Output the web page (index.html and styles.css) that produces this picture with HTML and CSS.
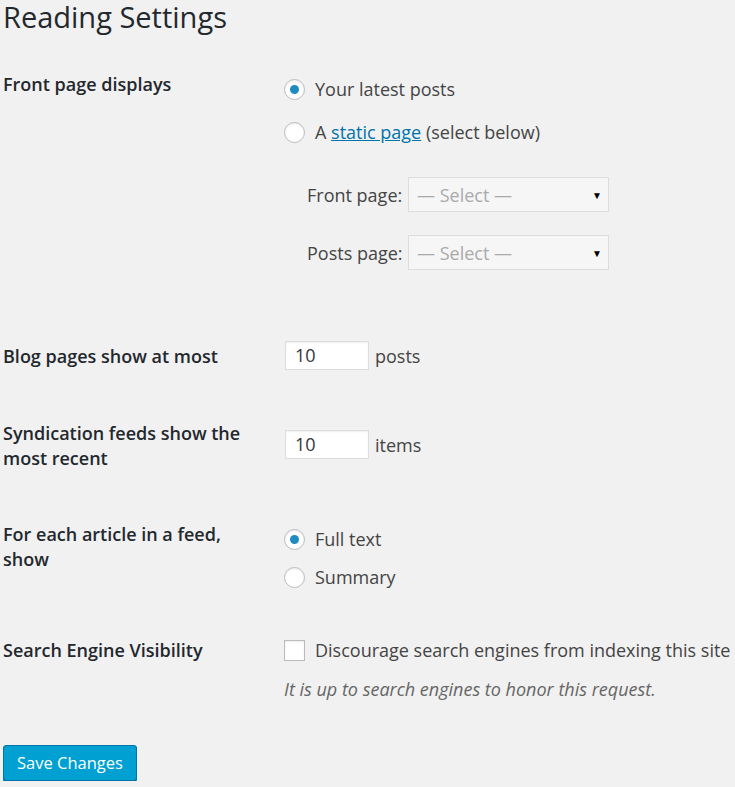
FILE: index.html
```html
<!DOCTYPE html>
<html lang="en">
<head>
<meta charset="utf-8">
<title>Reading Settings</title>
<link rel="stylesheet" href="styles.css">
</head>
<body>
<div class="wrap">
  <h1 class="page-title">Reading Settings</h1>
  <form class="settings">
    <div class="row row-front">
      <div class="label">Front page displays</div>
      <div class="field">
        <label class="choice"><span class="radio checked"></span>Your latest posts</label>
        <label class="choice"><span class="radio"></span>A&nbsp;<a href="#" class="link">static page</a>&nbsp;(select below)</label>
        <div class="sub">
          <div class="sub-row">
            <span class="sub-label">Front page:</span>
            <span class="select"><span class="select-text">— Select —</span><span class="caret">▼</span></span>
          </div>
          <div class="sub-row">
            <span class="sub-label">Posts page:</span>
            <span class="select"><span class="select-text">— Select —</span><span class="caret">▼</span></span>
          </div>
        </div>
      </div>
    </div>

    <div class="row row-blog">
      <div class="label">Blog pages show at most</div>
      <div class="field inline">
        <span class="num">10</span><span class="unit">posts</span>
      </div>
    </div>

    <div class="row row-feed">
      <div class="label">Syndication feeds show the most recent</div>
      <div class="field inline">
        <span class="num">10</span><span class="unit">items</span>
      </div>
    </div>

    <div class="row row-article">
      <div class="label">For each article in a feed, show</div>
      <div class="field">
        <label class="choice"><span class="radio checked"></span>Full text</label>
        <label class="choice choice-tight"><span class="radio"></span>Summary</label>
      </div>
    </div>

    <div class="row row-search">
      <div class="label">Search Engine Visibility</div>
      <div class="field">
        <label class="choice"><span class="check"></span>Discourage search engines from indexing this site</label>
        <p class="desc">It is up to search engines to honor this request.</p>
      </div>
    </div>

    <div class="submit">
      <span class="button">Save Changes</span>
    </div>
  </form>
</div>
</body>
</html>
```

FILE: styles.css
```css
html, body {
  margin: 0;
  padding: 0;
  background: #f1f1f1;
}

body {
  font-family: "Open Sans", "Liberation Sans", sans-serif;
  color: #444;
  font-size: 18px;
}

.wrap {
  padding: 0 0 0 3px;
}

.page-title {
  margin: 0;
  font-size: 29px;
  font-weight: 400;
  color: #23282d;
  line-height: 34px;
}

.settings {
  margin-top: 41px;
}

.row {
  display: grid;
  grid-template-columns: 281px 1fr;
}

.label {
  font-weight: 600;
  color: #23282d;
  line-height: 25px;
  width: 240px;
}

.field {
  display: flex;
  flex-direction: column;
}

.choice {
  display: flex;
  align-items: center;
  line-height: 24px;
  color: #444;
}

.radio, .check {
  box-sizing: border-box;
  width: 21px;
  height: 21px;
  margin-right: 10px;
  background: #fff;
  border: 1px solid #bbb;
  box-shadow: inset 0 1px 2px rgba(0, 0, 0, 0.08);
  flex: none;
}

.radio {
  border-radius: 50%;
  display: flex;
  align-items: center;
  justify-content: center;
}

.radio.checked::after {
  content: "";
  width: 9px;
  height: 9px;
  border-radius: 50%;
  background: #1e8cbe;
}

.link {
  color: #0073aa;
  text-decoration: underline;
}

/* front page row spacing */
.row-front .label { margin-top: -3px; }
.row-front .field { margin-top: 2px; }
.row-front .choice + .choice { margin-top: 19px; }

.sub {
  padding-left: 23px;
  margin-top: 33px;
}

.sub-row {
  display: flex;
  align-items: center;
  margin-bottom: 23px;
}

.sub-label {
  color: #444;
  width: 101px;
}

.select {
  box-sizing: border-box;
  width: 201px;
  height: 35px;
  display: flex;
  align-items: center;
  justify-content: space-between;
  padding: 0 6px 0 8px;
  border: 1px solid #ddd;
  background: #f6f6f6;
  color: #aaa;
}

.caret {
  color: #000;
  font-size: 10px;
}

.row-blog { margin-top: 48px; }
.row-feed { margin-top: 60px; }
.row-article { margin-top: 56px; }
.row-search { margin-top: 49px; }

.inline {
  flex-direction: row;
  align-items: center;
  align-self: start;
}

.row-blog .label { margin-top: 3px; }
.row-feed .label { margin-top: -9px; }

.num {
  box-sizing: border-box;
  width: 84px;
  height: 29px;
  line-height: 27px;
  padding-left: 9px;
  background: #fff;
  border: 1px solid #ddd;
  box-shadow: inset 0 1px 2px rgba(0, 0, 0, 0.07);
  color: #32373c;
  margin-left: 1px;
  margin-right: 6px;
}

.unit {
  color: #444;
}

.row-article .label { margin-top: -5px; }
.row-article .choice-tight { margin-top: 14px; }

.check {
  border-radius: 0;
}

.desc {
  margin: 15px 0 0;
  font-style: italic;
  color: #666;
  line-height: 24px;
}

.submit {
  margin-top: 44px;
}

.button {
  display: inline-block;
  box-sizing: border-box;
  height: 36px;
  line-height: 33px;
  padding: 0 13px;
  background: #00a0d2;
  border: 1px solid #0073aa;
  border-radius: 3px;
  box-shadow: 0 1px 0 #006799;
  color: #fff;
  font-size: 16.5px;
}
```
